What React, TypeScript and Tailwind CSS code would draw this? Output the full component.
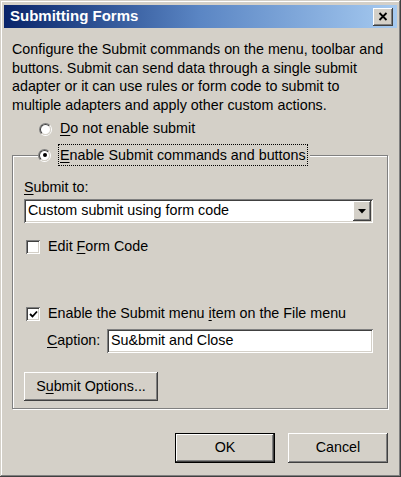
import React from "react";

const font = { fontFamily: '"Liberation Sans", Arial, sans-serif' };

const sunken =
  "shadow-[inset_1px_1px_#808080,inset_-1px_-1px_#ffffff,inset_2px_2px_#404040,inset_-2px_-2px_#d4d0c8]";
const raised =
  "shadow-[inset_-1px_-1px_#404040,inset_1px_1px_#ffffff,inset_-2px_-2px_#808080,inset_2px_2px_#d4d0c8]";

function Radio({ checked }: { checked?: boolean }) {
  return (
    <span className="flex h-[13px] w-[13px] shrink-0 rounded-full border border-t-[#808080] border-l-[#808080] border-r-white border-b-white">
      <span className="flex flex-1 items-center justify-center rounded-full border border-t-[#404040] border-l-[#404040] border-r-[#d4d0c8] border-b-[#d4d0c8] bg-white">
        {checked && <span className="h-[4px] w-[4px] rounded-full bg-black" />}
      </span>
    </span>
  );
}

function Checkbox({ checked }: { checked?: boolean }) {
  return (
    <span className={`flex h-[14px] w-[14px] shrink-0 items-center justify-center bg-white ${sunken}`}>
      {checked && (
        <svg width="9" height="9" viewBox="0 0 9 9">
          <path d="M1 4 L3.5 6.5 L8 1.5" fill="none" stroke="#000" strokeWidth="1.8" />
        </svg>
      )}
    </span>
  );
}

function U({ children }: { children: React.ReactNode }) {
  return <span className="underline underline-offset-[2px]">{children}</span>;
}

export default function App() {
  return (
    <div
      className="flex h-[477px] w-[401px] flex-col bg-[#d4d0c8] px-[4px] pt-[5px] text-[14.3px] text-black shadow-[inset_-1px_-1px_#404040,inset_1px_1px_#d4d0c8,inset_-2px_-2px_#808080,inset_2px_2px_#ffffff]"
      style={font}
    >
      <div className="flex h-[23px] items-center justify-between bg-gradient-to-r from-[#0a246a] via-[#5b86c4] to-[#a6caf0] pl-[6px] pr-[4px]">
        <span className="text-[15px] font-bold text-white">Submitting Forms</span>
        <span className={`flex h-[18px] w-[20px] items-center justify-center bg-[#d4d0c8] ${raised}`}>
          <svg width="10" height="9" viewBox="0 0 10 9">
            <path d="M1.5 1 L8.5 8 M8.5 1 L1.5 8" stroke="#000" strokeWidth="1.8" />
          </svg>
        </span>
      </div>

      <div className="flex flex-col px-[8px]">
        <p className="mt-[12px] leading-[18.5px]">
          Configure the Submit commands on the menu, toolbar and buttons. Submit can send data through a single submit
          adapter or it can use rules or form code to submit to multiple adapters and apply other custom actions.
        </p>

        <div className="mt-[6px] flex h-[18px] items-center gap-[8px] pl-[27px]">
          <Radio />
          <span>
            <U>D</U>o not enable submit
          </span>
        </div>

        <fieldset className="mt-[5px] w-[376px] border border-[#808080] pb-[7px] pl-[11px] pr-[14px] shadow-[1px_1px_0_#ffffff,inset_1px_1px_0_#ffffff]">
          <legend className="ml-[14px] flex h-[24px] items-center gap-[7px] bg-[#d4d0c8] pr-[2px]">
            <Radio checked />
            <span className="border border-dotted border-black px-[1px] leading-[20px]">
              <U>E</U>nable Submit commands and buttons
            </span>
          </legend>

          <div className="mt-[11px] h-[18px] leading-[18px]">
            <U>S</U>ubmit to:
          </div>

          <div className={`mt-[3px] flex h-[24px] items-center bg-white pl-[4px] pr-[2px] ${sunken}`}>
            <span className="flex-1">Custom submit using form code</span>
            <span className={`flex h-[20px] w-[18px] items-center justify-center bg-[#d4d0c8] ${raised}`}>
              <svg width="8" height="5" viewBox="0 0 8 5">
                <path d="M0 0 H8 L4 4.5 Z" fill="#000" />
              </svg>
            </span>
          </div>

          <div className="mt-[15px] flex h-[18px] items-center gap-[8px] pl-[2px]">
            <Checkbox />
            <span>
              Edit <U>F</U>orm Code
            </span>
          </div>

          <div className="mt-[49px] flex h-[18px] items-center gap-[8px] pl-[2px]">
            <Checkbox checked />
            <span>
              Enable the Submit menu <U>i</U>tem on the File menu
            </span>
          </div>

          <div className="mt-[6px] flex h-[24px] items-center pl-[23px]">
            <span className="w-[60px]">
              <U>C</U>aption:
            </span>
            <span className={`flex h-[24px] flex-1 items-center bg-white pl-[4px] ${sunken}`}>Su&amp;bmit and Close</span>
          </div>

          <button
            className={`mt-[19px] flex h-[29px] w-[134px] items-center justify-center bg-[#d4d0c8] ${raised}`}
          >
            S<U>u</U>bmit Options...
          </button>
        </fieldset>

        <div className="mt-[24px] flex justify-end gap-[13px] pr-[1px]">
          <button className="h-[30px] w-[100px] border border-black bg-[#d4d0c8]">
            <span className={`flex h-full w-full items-center justify-center ${raised}`}>OK</span>
          </button>
          <button className={`flex h-[30px] w-[100px] items-center justify-center bg-[#d4d0c8] ${raised}`}>
            Cancel
          </button>
        </div>
      </div>
    </div>
  );
}
